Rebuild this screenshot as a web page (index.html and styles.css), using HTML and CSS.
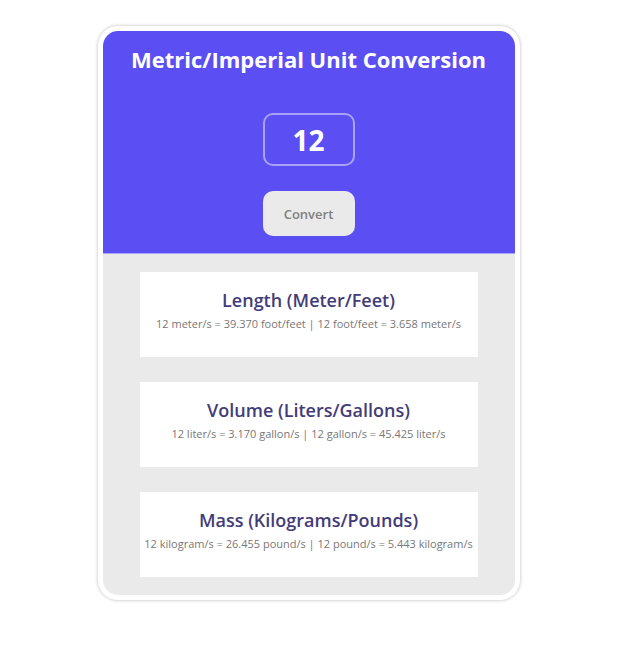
FILE: index.html
```html
<!DOCTYPE html>
<html lang="en">
<head>
<meta charset="utf-8">
<meta name="viewport" content="width=device-width, initial-scale=1">
<title>Unit Conversion</title>
<link rel="stylesheet" href="styles.css">
</head>
<body>
<main class="card">
  <form class="converter">
    <h1 class="title">Metric/Imperial Unit Conversion</h1>
    <input class="amount" type="text" inputmode="decimal" aria-label="Value to convert" value="12">
    <button class="convert" type="button">Convert</button>
  </form>
  <div class="results">
    <section class="result">
      <h2 class="result-title">Length (Meter/Feet)</h2>
      <p class="result-text">12 meter/s = 39.370 foot/feet | 12 foot/feet = 3.658 meter/s</p>
    </section>
    <section class="result">
      <h2 class="result-title">Volume (Liters/Gallons)</h2>
      <p class="result-text">12 liter/s = 3.170 gallon/s | 12 gallon/s = 45.425 liter/s</p>
    </section>
    <section class="result">
      <h2 class="result-title">Mass (Kilograms/Pounds)</h2>
      <p class="result-text">12 kilogram/s = 26.455 pound/s | 12 pound/s = 5.443 kilogram/s</p>
    </section>
  </div>
</main>
</body>
</html>
```
FILE: styles.css
```css
* {
  box-sizing: border-box;
}

body {
  margin: 0;
  padding: 26px 16px;
  background: #fff;
  font-family: "Segoe UI", "Open Sans", sans-serif;
}

.card {
  max-width: 422px;
  margin: 0 auto;
  padding: 5px;
  border-radius: 20px;
  background: #fff;
  box-shadow: 0 0 3px 1px #d6d6d6;
}

.converter {
  display: flex;
  flex-direction: column;
  align-items: center;
  padding: 13px 16px 17px;
  border-bottom: 1px solid #aaa4f6;
  border-radius: 15px 15px 0 0;
  background: #5b4ff3;
}

.title {
  margin: 0 0 39px;
  color: #fff;
  font-size: 22px;
  line-height: 30px;
  font-weight: 700;
  text-align: center;
}

.amount {
  width: 92px;
  height: 53px;
  margin-bottom: 25px;
  padding: 0;
  border: 2px solid #a8a2f8;
  border-radius: 10px;
  background: transparent;
  color: #fff;
  font: 700 28px "Segoe UI", "Open Sans", sans-serif;
  text-align: center;
}

.convert {
  width: 92px;
  height: 45px;
  padding: 0;
  border: 0;
  border-radius: 10px;
  background: #eaeaea;
  color: #808080;
  font: 600 13px "Segoe UI", "Open Sans", sans-serif;
}

.results {
  display: grid;
  gap: 25px;
  padding: 18px 37px;
  border-radius: 0 0 15px 15px;
  background: #eaeaea;
}

.result {
  padding: 15px 0 23px;
  background: #fff;
  text-align: center;
}

.result-title {
  margin: 0;
  color: #433c78;
  font-size: 18px;
  line-height: 27px;
  font-weight: 600;
}

.result-text {
  margin: 0;
  color: #777;
  font-size: 11px;
  line-height: 20px;
  font-weight: 400;
}
```
